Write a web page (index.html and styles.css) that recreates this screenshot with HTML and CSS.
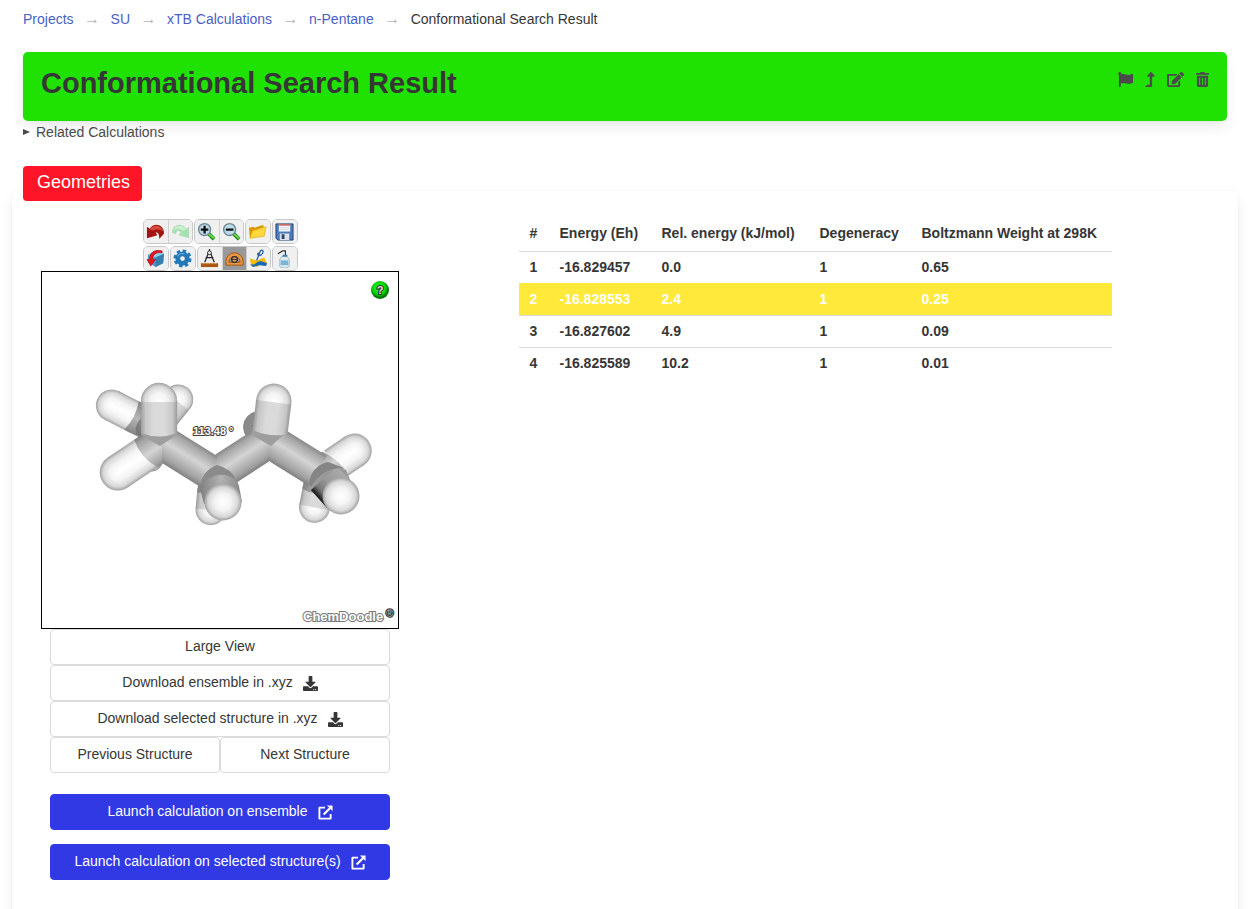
FILE: index.html
```html
<!DOCTYPE html>
<html lang="en">
<head>
<meta charset="utf-8">
<title>Conformational Search Result</title>
<link rel="stylesheet" href="styles.css">
</head>
<body>
<svg class="defs" aria-hidden="true">
  <defs>
    <symbol id="download" viewBox="0 0 512 512"><path d="M216 0h80c13.300 0 24 10.700 24 24v168h87.700c17.800 0 26.700 21.500 14.100 34.100L269.700 378.300c-7.500 7.500-19.800 7.500-27.300 0L90.100 226.100c-12.600-12.600-3.700-34.100 14.100-34.100H192V24c0-13.300 10.700-24 24-24zm296 376v112c0 13.300-10.700 24-24 24H24c-13.300 0-24-10.700-24-24V376c0-13.300 10.700-24 24-24h146.700l49 49c20.100 20.100 52.500 20.100 72.600 0l49-49H488c13.300 0 24 10.700 24 24zm-124 88c0-11-9-20-20-20s-20 9-20 20 9 20 20 20 20-9 20-20zm64 0c0-11-9-20-20-20s-20 9-20 20 9 20 20 20 20-9 20-20z"/></symbol>
    <symbol id="external" viewBox="0 0 16 16"><path d="M7.500 2.800H1.500V14.500h12V9.500" fill="none" stroke="currentColor" stroke-width="2" stroke-linejoin="round"/><path d="M6 10.200L13 3.200" stroke="currentColor" stroke-width="2.300"/><path d="M9.500.5h6v6z"/></symbol>
    <linearGradient id="carbon" x1="0" y1="0" x2="0" y2="1"><stop offset="0" stop-color="#888"/><stop offset=".12" stop-color="#a6a6a6"/><stop offset=".45" stop-color="#d4d4d4"/><stop offset=".85" stop-color="#a2a2a2"/><stop offset="1" stop-color="#808080"/></linearGradient>
    <linearGradient id="carbonDark" x1="0" y1="0" x2="0" y2="1"><stop offset="0" stop-color="#858585"/><stop offset=".5" stop-color="#b8b8b8"/><stop offset="1" stop-color="#808080"/></linearGradient>
    <linearGradient id="carbonFront" x1="0" y1="0" x2="1" y2="0"><stop offset="0" stop-color="#808080"/><stop offset=".5" stop-color="#b2b2b2"/><stop offset="1" stop-color="#858585"/></linearGradient>
    <linearGradient id="shade" x1="0" y1="0" x2="0" y2="1"><stop offset="0" stop-color="#aaa"/><stop offset=".5" stop-color="#999"/><stop offset=".8" stop-color="#777"/><stop offset="1" stop-color="#111"/></linearGradient>
    <linearGradient id="hydrogen" x1="0" y1="0" x2="0" y2="1"><stop offset="0" stop-color="#a0a0a0"/><stop offset=".1" stop-color="#d8d8d8"/><stop offset=".28" stop-color="#f4f4f4"/><stop offset=".5" stop-color="#fff"/><stop offset=".72" stop-color="#f4f4f4"/><stop offset=".9" stop-color="#d8d8d8"/><stop offset="1" stop-color="#a0a0a0"/></linearGradient>
    <linearGradient id="hydrogenDim" x1="0" y1="0" x2="0" y2="1"><stop offset="0" stop-color="#999"/><stop offset=".12" stop-color="#c6c6c6"/><stop offset=".35" stop-color="#dadada"/><stop offset=".65" stop-color="#dadada"/><stop offset=".88" stop-color="#c6c6c6"/><stop offset="1" stop-color="#999"/></linearGradient>
    <radialGradient id="ball"><stop offset="0" stop-color="#fff"/><stop offset=".44" stop-color="#f4f4f4"/><stop offset=".8" stop-color="#d8d8d8"/><stop offset="1" stop-color="#a0a0a0"/></radialGradient>
    <radialGradient id="help-ball" cx=".45" cy=".4"><stop offset="0" stop-color="#3cf63c"/><stop offset=".7" stop-color="#00d800"/><stop offset="1" stop-color="#047a04"/></radialGradient>
  </defs>
</svg>

<nav class="breadcrumb" aria-label="Breadcrumb">
  <ol>
    <li><a href="#">Projects</a></li>
    <li><a href="#">SU</a></li>
    <li><a href="#">xTB Calculations</a></li>
    <li><a href="#">n-Pentane</a></li>
    <li aria-current="page">Conformational Search Result</li>
  </ol>
</nav>

<header class="banner">
  <h1>Conformational Search Result</h1>
  <div class="actions">
    <button type="button" aria-label="Flag"><svg width="15" height="15" viewBox="0 0 512 512"><path d="M349.565 98.783C295.978 98.783 251.721 64 184.348 64c-24.955 0-47.309 4.384-68.045 12.013a55.947 55.947 0 0 0 3.586-23.562C118.117 24.015 94.806 1.206 66.338.048 34.345-1.254 8 24.296 8 56c0 19.026 9.497 35.825 24 45.945V488c0 13.255 10.745 24 24 24h16c13.255 0 24-10.745 24-24v-94.400c28.311-12.064 63.582-22.122 114.435-22.122 53.588 0 97.844 34.783 165.217 34.783 48.169 0 86.667-16.294 122.505-40.858C506.840 359.452 512 349.571 512 339.045v-243.100c0-23.393-24.269-38.870-45.485-29.016-34.338 15.948-76.454 31.854-116.950 31.854z"/></svg></button>
    <button type="button" aria-label="Move up"><svg width="10" height="15" viewBox="0 0 320 512"><path d="M313.553 119.669L209.587 7.666c-9.485-10.214-25.676-10.229-35.174 0L70.438 119.669C56.232 134.969 67.062 160 88.025 160H152v272H68.024a11.996 11.996 0 0 0-8.485 3.515l-56 56C-4.021 499.074 1.333 512 12.024 512H208c13.255 0 24-10.745 24-24V160h63.966c20.878 0 31.851-24.969 17.587-40.331z"/></svg></button>
    <button type="button" aria-label="Edit"><svg width="17" height="15" viewBox="0 0 576 512"><path d="M402.600 83.200l90.200 90.200c3.800 3.800 3.800 10 0 13.800L274.400 405.600l-92.800 10.300c-12.400 1.400-22.900-9.100-21.500-21.500l10.300-92.800L388.800 83.200c3.800-3.800 10-3.800 13.800 0zm162-22.900l-48.800-48.800c-15.200-15.200-39.900-15.200-55.200 0l-35.400 35.400c-3.800 3.800-3.800 10 0 13.800l90.200 90.200c3.800 3.800 10 3.800 13.800 0l35.400-35.400c15.200-15.300 15.200-40 0-55.200zM384 346.200V448H64V128h229.800c3.200 0 6.200-1.300 8.500-3.500l40-40c7.600-7.600 2.200-20.500-8.500-20.500H48C21.500 64 0 85.500 0 112v352c0 26.500 21.500 48 48 48h352c26.500 0 48-21.500 48-48V306.200c0-10.700-12.900-16-20.500-8.500l-40 40c-2.200 2.300-3.500 5.300-3.500 8.500z"/></svg></button>
    <button type="button" aria-label="Delete"><svg width="13" height="15" viewBox="0 0 448 512"><path d="M32 464a48 48 0 0 0 48 48h288a48 48 0 0 0 48-48V128H32zm272-256a16 16 0 0 1 32 0v224a16 16 0 0 1-32 0zm-96 0a16 16 0 0 1 32 0v224a16 16 0 0 1-32 0zm-96 0a16 16 0 0 1 32 0v224a16 16 0 0 1-32 0zM432 32H312l-9.400-18.700A24 24 0 0 0 281.100 0H166.800a23.720 23.720 0 0 0-21.400 13.300L136 32H16A16 16 0 0 0 0 48v32a16 16 0 0 0 16 16h416a16 16 0 0 0 16-16V48a16 16 0 0 0-16-16z"/></svg></button>
  </div>
</header>

<details class="related"><summary>Related Calculations</summary></details>

<main class="panel">
  <h2 class="panel-tag">Geometries</h2>
  <div class="columns">
    <section class="viewer">
      <div class="toolbar">
        <div class="tool-row">
          <div class="group">
            <button type="button" aria-label="Undo"><svg viewBox="0 0 20 20"><path d="M1 17V5l3 2C8 0 19 2 19 12l-5 6c0-5-1-7-4-7l2 3z" fill="#a51313"/><path d="M4 8c4-6 12-5 14 2-4-3-7-3-10-1z" fill="#d84a3c"/></svg></button>
            <button type="button" aria-label="Redo" disabled><svg viewBox="0 0 20 20"><path d="M19 17V5l-3 2C12 0 1 2 1 11l4 2c1-4 3-5 5-2l-2 3z" fill="#a9dfb3"/><path d="M16 8C12 2 4 3 2 9c4-3 7-3 10 0z" fill="#cdf0cf"/></svg></button>
          </div>
          <div class="group">
            <button type="button" aria-label="Zoom in"><svg viewBox="0 0 20 20"><path d="M12 12l6 6" stroke="#16851c" stroke-width="4"/><path d="M12 12l6 5" stroke="#6cde45" stroke-width="2"/><circle cx="8" cy="8" r="6.300" fill="#bddded" stroke="#718891" stroke-width="1.500"/><path d="M4 8h8M8 4v8" stroke="#111" stroke-width="2.400"/></svg></button>
            <button type="button" aria-label="Zoom out"><svg viewBox="0 0 20 20"><path d="M12 12l6 6" stroke="#16851c" stroke-width="4"/><path d="M12 12l6 5" stroke="#6cde45" stroke-width="2"/><circle cx="8" cy="8" r="6.300" fill="#bddded" stroke="#718891" stroke-width="1.500"/><path d="M4 8h8" stroke="#111" stroke-width="2.400"/></svg></button>
          </div>
          <div class="group">
            <button type="button" aria-label="Open"><svg viewBox="0 0 20 20"><path d="M2 17L1 6l5-1 1 1 9-3 1 10z" fill="#d99700"/><path d="M2 17L5 9l5-1 1-1 8-2-2 10z" fill="#ffd83b" stroke="#e5a900" stroke-width=".7"/></svg></button>
          </div>
          <div class="group">
            <button type="button" aria-label="Save"><svg viewBox="0 0 20 20"><path d="M1 2h18v17H3l-2-2z" fill="#4b79bd" stroke="#24466e"/><path d="M4 2h12v8H4z" fill="#f5f7fa"/><path d="M4 2h12v2H4z" fill="#c66f68"/><path d="M5 6h10M5 8h10" stroke="#c4ced9" stroke-width=".7"/><path d="M5 12h10v7H5z" fill="#dce1e7"/><path d="M7 13h3v5H7z" fill="#29476f"/></svg></button>
          </div>
        </div>
        <div class="tool-row">
          <div class="group">
            <button type="button" aria-label="Rotate"><svg viewBox="0 0 20 20"><path d="M2 6l9-5 8 4-1 10-8 4-8-5z" fill="#4f9fcf"/><path d="M2 6l8 3 9-4-8-4z" fill="#91cee7"/><path d="M10 9l9-4-1 10-8 4z" fill="#3a7eaf"/><path d="M17 4C10 3 7 6 7 11l3 0-5 7-4-7 3 0C3 4 9 0 17 2z" fill="#e81420" stroke="#a20912" stroke-width=".6"/></svg></button>
          </div>
          <div class="group">
            <button type="button" aria-label="Settings"><svg viewBox="0 0 20 20"><circle cx="10" cy="10" r="5" fill="none" stroke="#2378b7" stroke-width="5"/><circle cx="10" cy="10" r="8" fill="none" stroke="#2378b7" stroke-width="3" stroke-dasharray="3.600 2.680"/><path d="M5 8c1-3 4-4 7-3" fill="none" stroke="#58a5d5" stroke-width="1.500"/></svg></button>
          </div>
          <div class="group">
            <button type="button" aria-label="Measure distance"><svg viewBox="0 0 20 20"><path d="M9 4L5 14M11 4l4 10M6 9h8M10 0v3" stroke="#222" stroke-width="1.300"/><circle cx="10" cy="4" r="2" fill="#fff" stroke="#222"/><path d="M1 15h18v4H1z" fill="#a9570e"/><path d="M4 15v1m3-1v1m3-1v1m3-1v1m3-1v1" stroke="#f3bc65"/></svg></button>
            <button type="button" class="pressed" aria-label="Measure angle" aria-pressed="true"><svg viewBox="0 0 20 20"><path d="M1 17v-4a9 9 0 0 1 18 0v4z" fill="#e79643" stroke="#a25410"/><path d="M4 14a6 6 0 0 1 12 0z" fill="#999" stroke="#a25410"/><circle cx="10" cy="11" r="3" fill="#e8a35b" stroke="#292929" stroke-width="1.300"/><path d="M7 11h6" stroke="#292929"/></svg></button>
            <button type="button" aria-label="Measure torsion"><svg viewBox="0 0 20 20"><path d="M1 10l7 2 8-3 3 6-6 1-5 3-6-3z" fill="#f5bb05"/><path d="M1 16c7 2 6-4 12-3l6 2-1 3-7-1-7 2z" fill="#1768b5"/><path d="M8 12L12 2c3-3 4 2 1 4s-5 0-3-2" fill="none" stroke="#235da0" stroke-width="1.300"/></svg></button>
          </div>
          <div class="group">
            <button type="button" aria-label="Clean"><svg viewBox="0 0 20 20"><path d="M3 5l5-3h3v6" fill="none" stroke="#333" stroke-width="1.200"/><path d="M7 8h6l2 3v7q0 2-5 2t-5-2v-7z" fill="#dcebf2" stroke="#8ba0ac" stroke-width=".7"/><path d="M6 12h8v5H6z" fill="#7bb4d5"/><path d="M8 6h5v2H8z" fill="#397baf"/></svg></button>
          </div>
        </div>
      </div>
      <svg class="molecule" viewBox="42 272 356 356" role="img" aria-label="n-Pentane structure with a measured angle">
        <circle cx="152" cy="461" r="10" fill="#bbb" stroke="#888"/>
        <!-- rear hydrogens of the first carbon -->
        <g transform="translate(160 422) rotate(-51)"><circle cx="29" r="15" fill="url(#ball)"/><rect y="-15" width="27" height="30" fill="url(#hydrogenDim)"/></g>
        <g transform="translate(160 430) rotate(-153)"><circle cx="54" r="16" fill="url(#ball)"/><rect x="25" y="-16" width="29" height="32" fill="url(#hydrogen)"/><path d="M0-16h32q-5 16 0 32H0z" fill="url(#carbonDark)"/></g>
        <path d="M141 418q-7 8-5 15l7 6 6-17z" fill="#666" opacity=".6"/>
        <!-- rear hydrogens of the remaining carbons -->
        <circle cx="259" cy="427" r="15.500" fill="#8b8b8b" stroke="#777" stroke-width=".7"/>
        <g transform="translate(214 474) rotate(95)"><circle cx="36" r="15.300" fill="url(#ball)"/><rect x="16" y="-15.300" width="20" height="30.600" fill="url(#hydrogenDim)"/><rect y="-15" width="20" height="30" fill="url(#carbonDark)"/></g>
        <g transform="translate(321 474) rotate(101)"><circle cx="34" r="15.500" fill="url(#ball)"/><rect x="16" y="-15.500" width="18" height="31" fill="url(#hydrogenDim)"/><path d="M0-15.500h18q5 15 0 31H0z" fill="url(#carbonDark)"/></g>
        <g transform="translate(323 472) rotate(-34)"><circle cx="38" r="17.200" fill="url(#ball)"/><rect x="13" y="-17.200" width="25" height="34.400" fill="url(#hydrogen)"/><path d="M-4-17h15q10 17 8 34H-4z" fill="url(#carbon)"/></g>
        <!-- carbon chain -->
        <g transform="translate(216 475) rotate(-33)"><path d="M11-17.500h65l-22 35h-65z" fill="url(#carbon)"/></g>
        <g transform="translate(160 441) rotate(32)"><path d="M-11-17.500h67l21 35H11z" fill="url(#carbon)"/></g>
        <g transform="translate(270 441) rotate(32)"><path d="M-11-17.500h67v35H11z" fill="url(#carbon)"/></g>
        <!-- front hydrogens -->
        <g transform="translate(160 444) rotate(146)"><circle cx="51" r="18" fill="url(#ball)"/><rect x="14" y="-18" width="37" height="36" fill="url(#hydrogen)"/><path d="M9-18h6q9 18 4 36h-9L-10 14z" fill="url(#carbon)"/></g>
        <path d="M141 429h36v6l-17 11-19-11z" fill="#9e9e9e"/>
        <g transform="translate(159 433) rotate(-90)"><circle cx="32" r="18.200" fill="url(#ball)"/><path d="M0-18.200q-7 18.200 0 36.400h31v-36.400z" fill="url(#hydrogenDim)"/></g>
        <path d="M252 430h34v3l-15 13-19-11z" fill="#9e9e9e"/>
        <g transform="translate(270 432) rotate(-83)"><circle cx="31" r="17.700" fill="url(#ball)"/><path d="M0-17.700q-6 17.700 0 35.400h30v-35.400z" fill="url(#hydrogenDim)"/></g>
        <path d="M200 489q1-18 17-24 18 6 22 21l3 16-38 2z" fill="url(#carbonFront)"/>
        <path d="M200 486q2-14 17-21 15 4 19 15-19-13-36 6z" fill="#8b8b8b"/>
        <circle cx="223" cy="502" r="18.500" fill="url(#ball)"/>
        <path d="M309 484q1-17 20-22l17 8 5 12-24 17z" fill="#999"/>
        <g transform="translate(327 481) rotate(48)"><rect x="-4" y="-17.500" width="24" height="35.500" fill="url(#shade)"/></g>
        <path d="M309 484q2-17 18-22l17 6q-22-1-33 19z" fill="#858585"/>
        <circle cx="341" cy="496" r="18.500" fill="url(#ball)"/>
        <text class="angle" x="193" y="435">113.48 °</text>
        <circle cx="380" cy="290" r="9" fill="url(#help-ball)"/>
        <text class="help" x="380" y="294" text-anchor="middle">?</text>
        <text class="brand" x="303" y="621">ChemDoodle</text>
        <text class="mark" x="386" y="617">®</text>
      </svg>
      <div class="controls">
        <button type="button" class="button">Large View</button>
        <button type="button" class="button">Download ensemble in .xyz <svg class="icon"><use href="#download"/></svg></button>
        <button type="button" class="button">Download selected structure in .xyz <svg class="icon"><use href="#download"/></svg></button>
        <div class="pair">
          <button type="button" class="button">Previous Structure</button>
          <button type="button" class="button">Next Structure</button>
        </div>
        <div class="launch">
          <button type="button" class="button primary">Launch calculation on ensemble <svg class="icon"><use href="#external"/></svg></button>
          <button type="button" class="button primary">Launch calculation on selected structure(s) <svg class="icon"><use href="#external"/></svg></button>
        </div>
      </div>
    </section>
    <section class="results">
      <table>
        <colgroup><col class="c-index"><col class="c-value"><col class="c-relative"><col class="c-value"><col class="c-weight"></colgroup>
        <thead><tr><th>#</th><th>Energy (Eh)</th><th>Rel. energy (kJ/mol)</th><th>Degeneracy</th><th>Boltzmann Weight at 298K</th></tr></thead>
        <tbody>
          <tr><td>1</td><td>-16.829457</td><td>0.0</td><td>1</td><td>0.65</td></tr>
          <tr class="selected"><td>2</td><td>-16.828553</td><td>2.4</td><td>1</td><td>0.25</td></tr>
          <tr><td>3</td><td>-16.827602</td><td>4.9</td><td>1</td><td>0.09</td></tr>
          <tr><td>4</td><td>-16.825589</td><td>10.2</td><td>1</td><td>0.01</td></tr>
        </tbody>
      </table>
    </section>
  </div>
</main>
</body>
</html>
```
FILE: styles.css
```css
* { box-sizing: border-box; }
body {
  margin: 0;
  padding: 8px 19px 0 12px;
  background: #fff;
  color: #363636;
  font: 14px/22px "Liberation Sans", Arial, sans-serif;
}
button { font: inherit; color: inherit; cursor: pointer; }
.defs { position: absolute; width: 0; height: 0; }

.breadcrumb { padding: 0 11px; }
.breadcrumb ol { display: flex; flex-wrap: wrap; margin: 0; padding: 0; list-style: none; }
.breadcrumb li { display: flex; }
.breadcrumb li + li::before {
  content: "→";
  width: 37px;
  text-align: center;
  color: #b5b5b5;
  font-size: 16px;
}
.breadcrumb a { color: #485fc7; text-decoration: none; }

.banner {
  display: flex;
  justify-content: space-between;
  margin: 22px 11px 0;
  padding: 14px 18px 21px;
  border-radius: 5px;
  background: #1fe203;
  box-shadow: 0 7px 14px -2px rgba(10, 10, 10, .1), 0 0 0 1px rgba(10, 10, 10, .02);
}
h1 { margin: 0; font-size: 29px; line-height: 34px; }
.actions { display: flex; gap: 12px; height: 27px; align-items: center; color: #4a4a4a; }
.actions button { padding: 0; border: 0; background: none; }
.actions svg { display: block; fill: currentColor; }

.related { margin: 0 11px; color: #4a4a4a; }
.related summary { display: flex; align-items: center; gap: 6px; list-style: none; cursor: pointer; }
.related summary::before {
  content: "";
  border-left: 7px solid #4a4a4a;
  border-top: 3px solid transparent;
  border-bottom: 3px solid transparent;
}

.panel {
  display: flow-root;
  margin-top: 48px;
  padding: 0 18px 48px;
  border-radius: 5px;
  box-shadow: 0 7px 14px -2px rgba(10, 10, 10, .1), 0 0 0 1px rgba(10, 10, 10, .02);
}
.panel-tag {
  width: max-content;
  margin: -25px 0 15px -7px;
  padding: 4px 12px 7px 14px;
  border-radius: 4px;
  background: #ff1528;
  color: #fff;
  font-size: 18px;
  font-weight: 400;
  line-height: 24px;
}
.columns { display: grid; grid-template-columns: 380px 1fr; }
.viewer { padding: 3px 11px 0; }

.toolbar { display: flex; flex-direction: column; align-items: center; gap: 2px; }
.tool-row { display: flex; gap: 1px; }
.group { display: flex; overflow: hidden; border: 1px solid #c8c8c8; border-radius: 5px; background: #f0f0f0; }
.group button { width: 24px; height: 23px; padding: 2px; border: 0; background: #f0f0f0; }
.group button + button { border-left: 1px solid #d0d0d0; }
.group .pressed { background: #999; }
.group svg { display: block; width: 19px; height: 19px; }

.molecule { display: block; width: 100%; border: 1px solid #000; background: #fff; }
.molecule text { font-weight: 700; paint-order: stroke; }
.angle { font-size: 11px; fill: #fff; stroke: #444; stroke-width: 2px; }
.help { font-size: 11px; fill: #ddd; stroke: #333; stroke-width: 2px; }
.brand { font-size: 13px; fill: #fff; stroke: #777; stroke-width: 2px; }
.mark { font-size: 10px; fill: #aaa; stroke: #333; stroke-width: 2px; }

.controls { padding: 0 9px; }
.button {
  display: flex;
  align-items: center;
  justify-content: center;
  gap: 10px;
  width: 100%;
  height: 36px;
  padding: 0 0 2px;
  border: 1px solid #dbdbdb;
  border-radius: 4px;
  background: #fff;
}
.icon { width: 15px; height: 15px; margin-top: 2px; fill: currentColor; }
.pair { display: flex; }
.launch { display: grid; gap: 14px; margin-top: 21px; }
.primary { border-color: #3039e4; background: #3039e4; color: #fff; }

table { margin: 0 auto; border-collapse: collapse; table-layout: fixed; width: 593px; max-width: 100%; }
.c-index { width: 30px; }
.c-value { width: 102px; }
.c-relative { width: 158px; }
.c-weight { width: 201px; }
th, td { padding: 4px 11px 5px; border-top: 1px solid #dbdbdb; text-align: left; font-weight: 700; white-space: nowrap; }
th { padding: 6px 11px 7px; border-top: 0; }
.selected td { border-color: #ffe93b; background: #ffe93b; color: #fff; }
```
